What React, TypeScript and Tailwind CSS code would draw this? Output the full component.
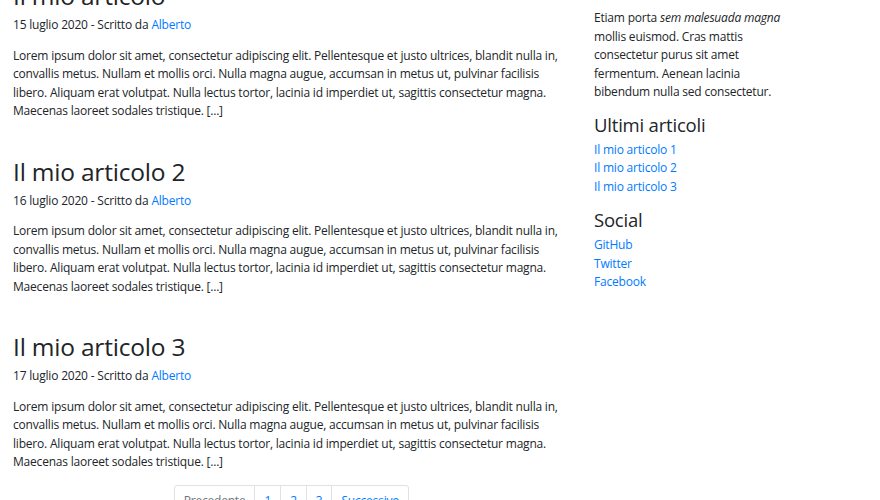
import React from 'react';

const lorem = [
  'Lorem ipsum dolor sit amet, consectetur adipiscing elit. Pellentesque et justo ultrices, blandit nulla in,',
  'convallis metus. Nullam et mollis orci. Nulla magna augue, accumsan in metus ut, pulvinar facilisis',
  'libero. Aliquam erat volutpat. Nulla lectus tortor, lacinia id imperdiet ut, sagittis consectetur magna.',
  'Maecenas laoreet sodales tristique. [...]',
];

const posts = [
  { title: 'Il mio articolo', date: '15 luglio 2020' },
  { title: 'Il mio articolo 2', date: '16 luglio 2020' },
  { title: 'Il mio articolo 3', date: '17 luglio 2020' },
];

function Post({ title, date, first }: { title: string; date: string; first?: boolean }) {
  return (
    <article className={first ? '' : 'mt-[36px]'}>
      <h2 className="text-[24.5px] leading-[30px] font-medium tracking-[-0.2px]">{title}</h2>
      <p className="mt-[5px]">
        {date} - Scritto da <a className="text-[#007bff]">Alberto</a>
      </p>
      <p className="mt-[12px]">
        {lorem.map((l) => (
          <span key={l} className="block whitespace-nowrap">
            {l}
          </span>
        ))}
      </p>
    </article>
  );
}

export default function App() {
  return (
    <div className="w-[880px] h-[500px] overflow-hidden bg-white text-[#212529] text-[12px] leading-[18.5px] tracking-[-0.2px] font-['Segoe_UI','Open_Sans',sans-serif]">
      <div className="flex -mt-[19px] pl-[13px]">
        <main className="w-[557px] flex flex-col">
          {posts.map((p, i) => (
            <Post key={p.title} title={p.title} date={p.date} first={i === 0} />
          ))}
          <nav className="mt-[13px] flex justify-center">
            <ul className="flex border border-[#dee2e6] rounded-[3px]">
              <li className="px-[9px] py-[6px] text-[#6c757d]">Precedente</li>
              <li className="px-[9px] py-[6px] border-l border-[#dee2e6] text-[#007bff]">1</li>
              <li className="px-[9px] py-[6px] border-l border-[#dee2e6] text-[#007bff]">2</li>
              <li className="px-[9px] py-[6px] border-l border-[#dee2e6] text-[#007bff]">3</li>
              <li className="px-[9px] py-[6px] border-l border-[#dee2e6] text-[#007bff]">Successivo</li>
            </ul>
          </nav>
        </main>
        <aside className="ml-[24px] w-[210px] pt-[28px]">
          <p>
            <span className="block">
              Etiam porta <em>sem malesuada magna</em>
            </span>
            <span className="block">mollis euismod. Cras mattis</span>
            <span className="block">consectetur purus sit amet</span>
            <span className="block">fermentum. Aenean lacinia</span>
            <span className="block">bibendum nulla sed consectetur.</span>
          </p>
          <h4 className="mt-[11.5px] text-[18.5px] leading-[23px] font-medium">Ultimi articoli</h4>
          <ol className="mt-[4.5px] text-[#007bff]">
            <li>Il mio articolo 1</li>
            <li>Il mio articolo 2</li>
            <li>Il mio articolo 3</li>
          </ol>
          <h4 className="mt-[11.5px] text-[18.5px] leading-[23px] font-medium">Social</h4>
          <ol className="mt-[5.5px] text-[#007bff]">
            <li>GitHub</li>
            <li>Twitter</li>
            <li>Facebook</li>
          </ol>
        </aside>
      </div>
    </div>
  );
}
